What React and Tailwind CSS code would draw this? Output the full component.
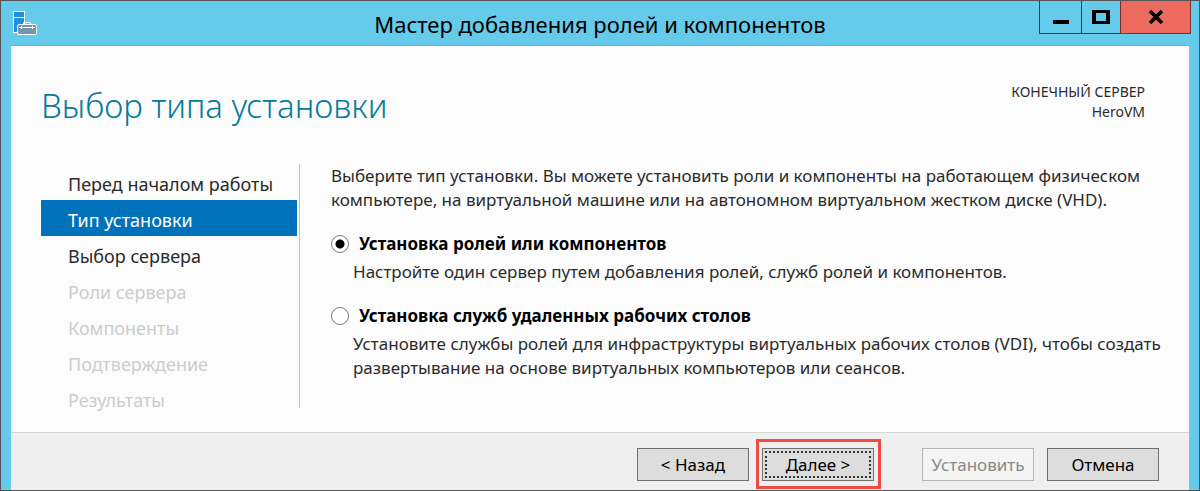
const steps = [
  { label: 'Перед началом работы', state: 'ready' },
  { label: 'Тип установки', state: 'current' },
  { label: 'Выбор сервера', state: 'ready' },
  { label: 'Роли сервера', state: 'disabled' },
  { label: 'Компоненты', state: 'disabled' },
  { label: 'Подтверждение', state: 'disabled' },
  { label: 'Результаты', state: 'disabled' },
];

const stepStyles = {
  ready: 'text-[#2b2b2b]',
  current: 'bg-[#0072bc] text-white',
  disabled: 'text-[#cccccc] pointer-events-none',
};

function ServerIcon() {
  return (
    <svg width="26" height="26" viewBox="0 0 26 26" aria-hidden="true">
      <rect x="1.5" y="1.5" width="11" height="21" fill="#1f8fe0" stroke="#fff" />
      <path d="M1.5 7.5h11" stroke="#fff" />
      <path d="M11.5 14.5v-2h7v2" fill="none" stroke="#e8f2f7" />
      <rect x="5.5" y="14.5" width="19" height="10" rx="1.5" fill="#7896aa" stroke="#fff" />
      <path d="M7 17.5h16M9.5 16v3M20.5 16v3" stroke="#fff" />
    </svg>
  );
}

function TitleBar() {
  return (
    <header className="relative flex h-11 items-center justify-center">
      <div className="absolute left-[11px] top-[9px]">
        <ServerIcon />
      </div>
      <h1 className="pt-[2px] text-[22px] leading-7 text-black">Мастер добавления ролей и компонентов</h1>
      <div className="absolute right-2 top-0 flex h-[33px]">
        <button type="button" aria-label="Свернуть" className="flex w-[43px] items-center justify-center border border-t-0 border-[#1d3f4e]">
          <svg width="16" height="14" viewBox="0 0 16 14"><path d="M0 10h16v4H0z" /></svg>
        </button>
        <button type="button" aria-label="Развернуть" className="flex w-[38px] items-center justify-center border-b border-[#1d3f4e]">
          <svg width="18" height="14" viewBox="0 0 18 14"><path fillRule="evenodd" d="M0 0h18v14H0zM4 3v8h10V3z" /></svg>
        </button>
        <button type="button" aria-label="Закрыть" className="flex w-[71px] items-center justify-center border border-t-0 border-[#7d2d2a] bg-[#ec6b5e]">
          <svg width="16" height="16" viewBox="0 0 16 16"><path d="M2 2l12 12M14 2L2 14" stroke="#000" strokeWidth="3.6" /></svg>
        </button>
      </div>
    </header>
  );
}

function Option({ id, title, defaultChecked, children }) {
  return (
    <div>
      <div className="flex h-6 items-center gap-[10px]">
        <input
          id={id}
          type="radio"
          name="install-type"
          defaultChecked={defaultChecked}
          aria-describedby={id + '-text'}
          className="size-[18px] shrink-0 appearance-none rounded-full border border-[#777777] bg-white checked:bg-[radial-gradient(circle,#000_0_4px,transparent_5px)]"
        />
        <label htmlFor={id} className="text-[17px] font-bold leading-6 text-black">{title}</label>
      </div>
      <p id={id + '-text'} className="pl-[22px] pt-1 text-[17px] leading-6">{children}</p>
    </div>
  );
}

const buttonBase = 'h-[33px] w-28 border text-[17px] leading-6';

export default function App() {
  return (
    <div className="border border-[#555555] bg-[#66caea] font-['Noto_Sans','Open_Sans',sans-serif] text-[#2b2b2b]">
      <TitleBar />
      <div className="mx-[10px] border-t border-[#6fb0c6] bg-[#fcfcfc]">
        <main className="flex h-[386px] flex-col pl-[30px] pr-[44px]">
          <div className="flex items-start justify-between pt-9">
            <h2 className="text-[33px] font-light leading-[48px] text-[#067a9c]">Выбор типа установки</h2>
            <p className="text-right text-[14px] leading-5">
              КОНЕЧНЫЙ СЕРВЕР
              <br />
              HeroVM
            </p>
          </div>
          <div className="flex items-start pt-[34px]">
            <nav className="h-[244px] w-[259px] shrink-0 border-r border-[#c4c4c4] pr-[2px]">
              <ul>
                {steps.map((step) => (
                  <li key={step.label}>
                    <a
                      href="#"
                      aria-current={step.state === 'current' ? 'step' : undefined}
                      aria-disabled={step.state === 'disabled' ? true : undefined}
                      className={'flex h-9 items-center pl-[27px] pt-1 text-[18px] leading-6 ' + stepStyles[step.state]}
                    >
                      {step.label}
                    </a>
                  </li>
                ))}
              </ul>
            </nav>
            <section className="flex grow flex-col gap-5 whitespace-nowrap pl-[31px]">
              <p className="text-[17px] leading-6">
                Выберите тип установки. Вы можете установить роли и компоненты на работающем физическом
                <br />
                компьютере, на виртуальной машине или на автономном виртуальном жестком диске (VHD).
              </p>
              <Option id="roles" title="Установка ролей или компонентов" defaultChecked>
                Настройте один сервер путем добавления ролей, служб ролей и компонентов.
              </Option>
              <Option id="rds" title="Установка служб удаленных рабочих столов">
                Установите службы ролей для инфраструктуры виртуальных рабочих столов (VDI), чтобы создать
                <br />
                развертывание на основе виртуальных компьютеров или сеансов.
              </Option>
            </section>
          </div>
        </main>
        <footer className="flex h-[58px] items-start justify-end gap-[13px] border-t border-[#d6d6d6] bg-[#efefef] pr-[30px] pt-[15px]">
          <button type="button" className={buttonBase + ' border-[#707070] bg-[#dddddd] text-black'}>&lt; Назад</button>
          <div className="relative mr-[35px]">
            <button type="button" className={buttonBase + ' block border-[#707070] bg-[#dddddd] p-[2px] text-black'}>
              <span className="flex h-full items-center justify-center border-2 border-dotted border-[#333333]">Далее &gt;</span>
            </button>
            <span className="pointer-events-none absolute -bottom-2 -left-[6px] -right-[7px] -top-[9px] border-3 border-[#ed4b43]" />
          </div>
          <button type="button" disabled className={buttonBase + ' border-[#b5b5b5] bg-[#f4f4f4] text-[#8a8a8a]'}>Установить</button>
          <button type="button" className={buttonBase + ' border-[#707070] bg-[#dddddd] text-black'}>Отмена</button>
        </footer>
      </div>
    </div>
  );
}
